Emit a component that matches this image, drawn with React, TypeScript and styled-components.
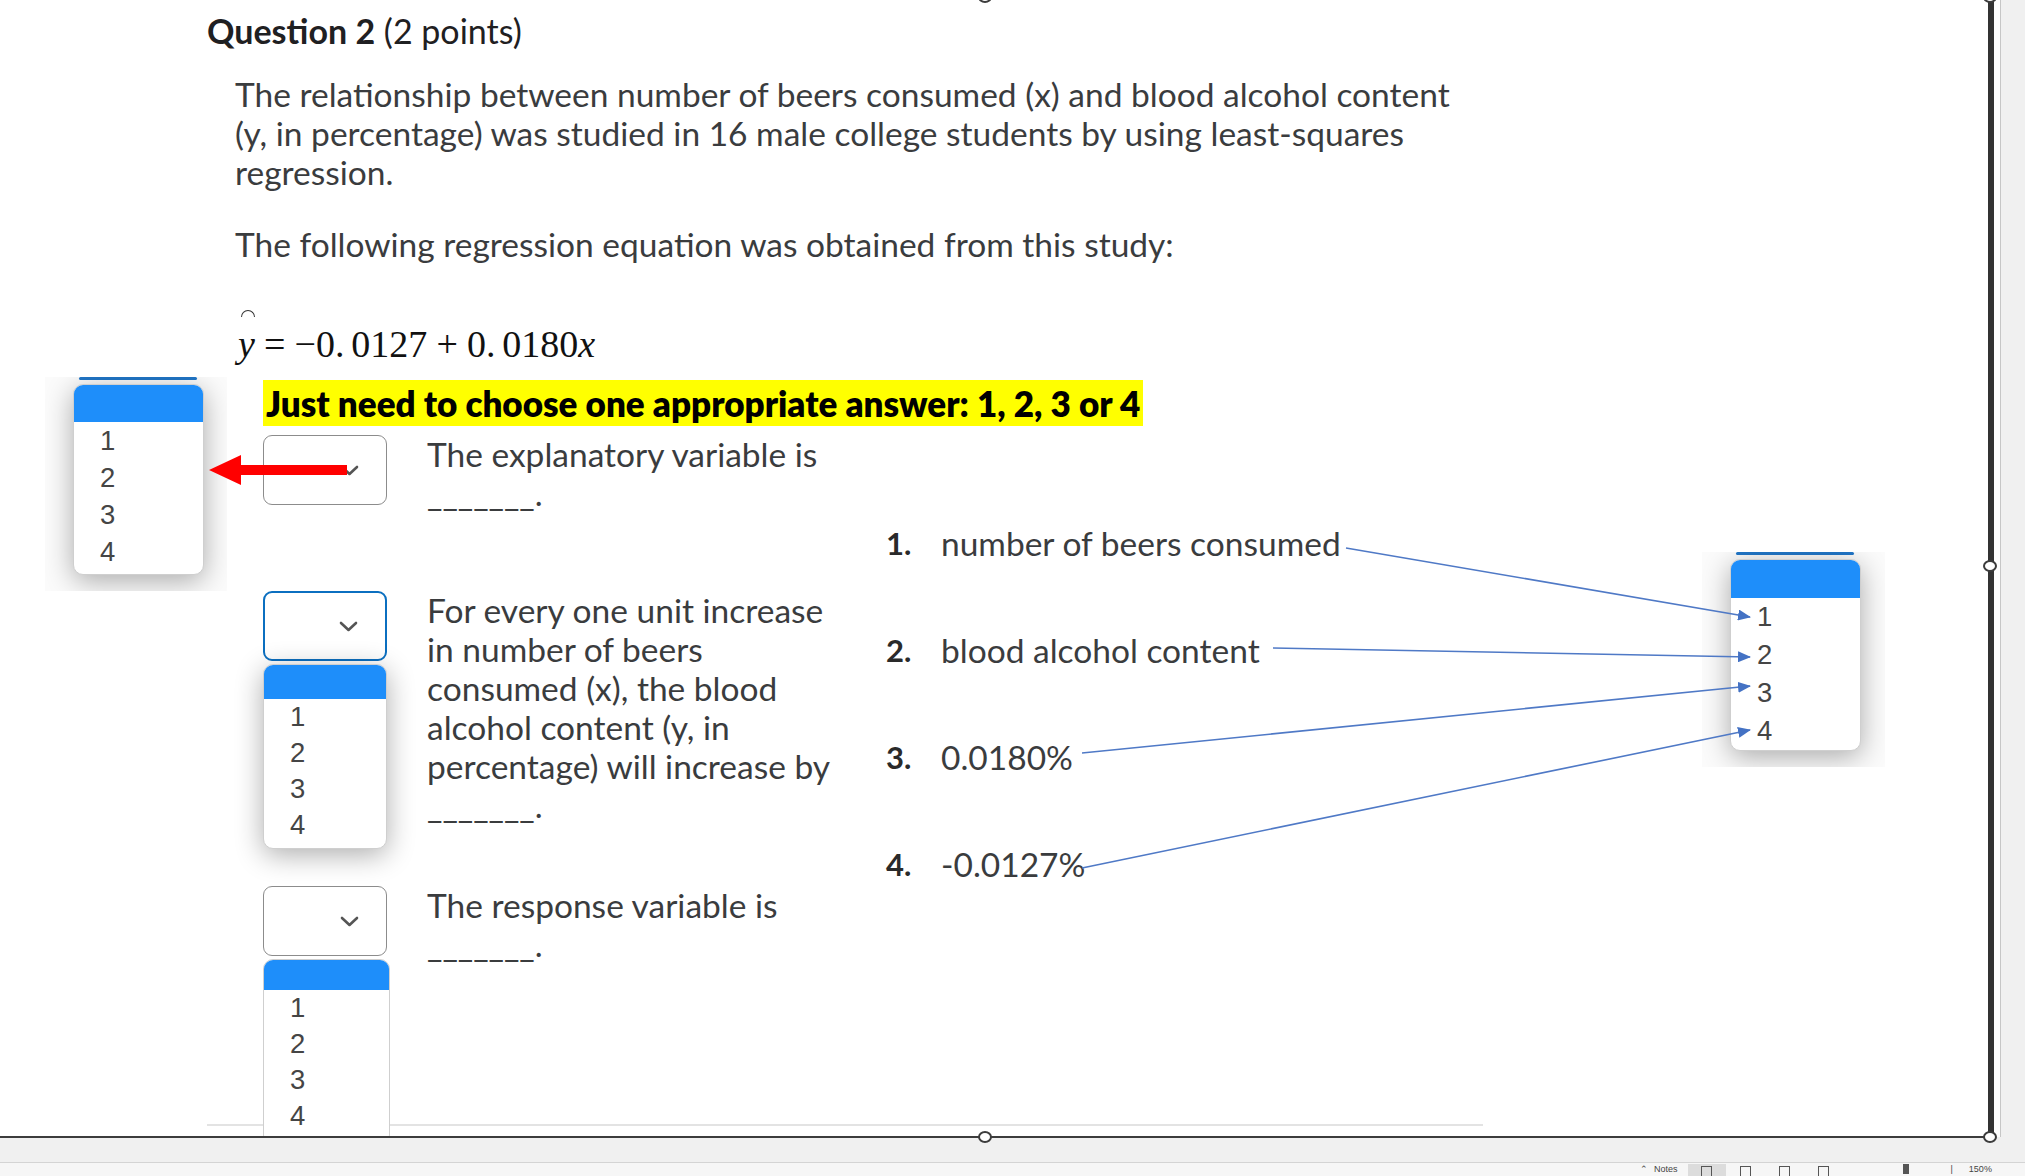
import React from 'react';
import styled, { createGlobalStyle } from 'styled-components';

// Slide-editor capture: a D2L-style quiz question pasted on a slide,
// with two cropped dropdown screenshots and connector arrows.

const GlobalStyle = createGlobalStyle`
  html, body {
    margin: 0;
    padding: 0;
    background: #f0f0f0;
  }
  body {
    width: 2025px;
    height: 1176px;
    overflow: hidden;
    font-family: Lato, "Open Sans", sans-serif;
  }
`;

// ─── window frame ────────────────────────────────────────────────────────

const Window = styled.div`
  position: relative;
  width: 2025px;
  height: 1176px;
  display: flex;
  flex-direction: column;
  background: #f0f0f0;
  overflow: hidden;
`;

const Workspace = styled.div`
  display: flex;
  height: 1138px;
  flex-shrink: 0;
`;

const Canvas = styled.div`
  display: flex;
  width: 1994px;
  border-bottom: 2px solid #3c3c3c;
  box-sizing: border-box;
`;

const Slide = styled.div`
  position: relative;
  flex: 1;
  background: #fff;
  overflow: hidden;
`;

const SelectionEdge = styled.div`
  width: 6px;
  background: #333;
`;

const EdgeStrip = styled.div`
  width: 6px;
  height: 1137px;
  background: #fff;
  border-right: 1px solid #c6c6c6;
`;

const BottomBand = styled.div`
  height: 24px;
  flex-shrink: 0;
  background: #f0f0f0;
  border-bottom: 1px solid #d4d4d4;
`;

const StatusBar = styled.div`
  flex: 1;
  display: flex;
  align-items: flex-start;
  padding: 1px 0 0 1640px;
  background: #f6f6f6;
  color: #444;
  font: 9px/11px "Liberation Sans", Arial, sans-serif;
  overflow: hidden;
`;

const StatusText = styled.span<{ $ml?: number }>`
  margin-left: ${p => p.$ml ?? 0}px;
`;

const ViewButton = styled.div<{ $active?: boolean; $ml?: number }>`
  width: 38px;
  height: 12px;
  margin-left: ${p => p.$ml ?? 0}px;
  background: ${p => (p.$active ? '#dcdcdc' : 'transparent')};
  display: flex;
  justify-content: center;
  padding-top: 2px;
  & > i {
    width: 11px;
    height: 10px;
    border: 1.5px solid #555;
    border-bottom: none;
    box-sizing: border-box;
  }
`;

const SliderThumb = styled.div<{ $ml: number }>`
  width: 6px;
  height: 10px;
  margin-left: ${p => p.$ml}px;
  background: #555;
`;

const Handle = styled.div<{ $x: number; $y: number }>`
  position: absolute;
  left: ${p => p.$x - 7}px;
  top: ${p => p.$y - 6}px;
  width: 14px;
  height: 12px;
  box-sizing: border-box;
  border: 2px solid #3c3c3c;
  border-radius: 50%;
  background: #fff;
`;

// ─── question content ────────────────────────────────────────────────────

const Content = styled.div`
  padding: 11px 0 0 207px;
`;

const Heading = styled.h2`
  margin: 0;
  font: 400 34px/40px Lato, sans-serif;
  color: #1f2022;
  strong {
    font-weight: 700;
  }
`;

const Body = styled.div`
  padding-left: 28px;
  color: #3a3c3e;
`;

const Paragraph = styled.p<{ $gap: number }>`
  margin: ${p => p.$gap}px 0 0;
  font: 400 33.5px/39px Lato, sans-serif;
  white-space: nowrap;
`;

const Equation = styled.div`
  margin-top: 40px;
  font-family: "Liberation Serif", "DejaVu Serif", serif;
  color: #111;
`;

const HatRow = styled.div`
  height: 18px;
  display: flex;
  align-items: flex-end;
  padding-left: 6px;
`;

const Hat = styled.span`
  width: 14px;
  height: 7px;
  box-sizing: border-box;
  border: 1.6px solid #333;
  border-bottom: none;
  border-radius: 8px 8px 0 0;
  margin-bottom: 5px;
`;

const MathLine = styled.div`
  font-size: 38px;
  line-height: 44px;
  white-space: nowrap;
  padding-left: 3px;
`;

const MathVar = styled.i`
  font-style: italic;
`;

const MathOp = styled.span`
  margin: 0 0.24em;
`;

const MathGap = styled.span`
  margin-right: 0.18em;
`;

const Notice = styled.div`
  margin: 14px 0 0 28px;
`;

const Highlight = styled.span`
  display: inline-block;
  padding: 0 3px;
  background: #ffff00;
  color: #000;
  font: 800 35px/46px Lato, sans-serif;
  white-space: nowrap;
`;

const QuizArea = styled.div`
  display: flex;
  margin: 9px 0 0 28px;
`;

const Questions = styled.div`
  width: 623px;
  display: flex;
  flex-direction: column;
`;

const QuestionRow = styled.div<{ $gap: number }>`
  display: flex;
  align-items: flex-start;
  gap: 40px;
  margin-top: ${p => p.$gap}px;
`;

const SelectWrap = styled.div`
  position: relative;
  flex-shrink: 0;
`;

const SelectBox = styled.div<{ $focused?: boolean }>`
  width: 124px;
  height: 70px;
  box-sizing: border-box;
  border: ${p => (p.$focused ? '2.5px solid #0b6fc0' : '1.5px solid #8c8c8c')};
  border-radius: 9px;
  background: #fff;
  display: flex;
  align-items: center;
  justify-content: flex-end;
  padding-right: 27px;
`;

const QuestionText = styled.div`
  font: 400 33.5px/39px Lato, sans-serif;
  color: #3a3c3e;
  white-space: nowrap;
`;

const Blank = styled.span`
  letter-spacing: 0;
`;

const AnswerKey = styled.ol`
  list-style: none;
  margin: 0;
  padding: 89px 0 0;
  display: flex;
  flex-direction: column;
  gap: 68px;
`;

const AnswerItem = styled.li`
  display: flex;
  font: 400 33.5px/39px Lato, sans-serif;
  color: #3a3c3e;
  white-space: nowrap;
`;

const AnswerNum = styled.span`
  width: 55px;
  font-weight: 700;
  font-size: 31px;
  color: #2a2a2a;
`;

const Divider = styled.div`
  width: 1276px;
  height: 2px;
  margin-top: 160px;
  background: #e3e3e3;
`;

// ─── dropdown lists ──────────────────────────────────────────────────────

const OptionList = styled.div<{ $width: number; $head: number; $row: number; $pad?: number; $shadow?: boolean }>`
  --head: ${p => p.$head}px;
  --row: ${p => p.$row}px;
  width: ${p => p.$width}px;
  padding-bottom: ${p => p.$pad ?? 0}px;
  box-sizing: border-box;
  background: #fff;
  border: 1px solid #cfcfcf;
  border-radius: 10px;
  overflow: hidden;
  box-shadow: ${p => (p.$shadow ? '0 6px 28px rgba(0, 0, 0, 0.32)' : 'none')};
  font: 400 27.5px "Liberation Sans", Arial, sans-serif;
  color: #454545;
`;

const OptionHeader = styled.div`
  height: var(--head);
  background: #1e8efa;
`;

const OptionItem = styled.div`
  height: var(--row);
  line-height: var(--row);
  padding-left: 26px;
`;

const DropList = styled.div`
  position: absolute;
  left: 0;
  top: calc(100% + 3px);
  z-index: 3;
`;

const ShotPanel = styled.div<{ $x: number; $y: number; $w: number; $h: number }>`
  position: absolute;
  left: ${p => p.$x}px;
  top: ${p => p.$y}px;
  width: ${p => p.$w}px;
  height: ${p => p.$h}px;
  overflow: hidden;
  background: #fbfbfb;
  display: flex;
  flex-direction: column;
  padding: 0 0 0 28px;
  box-sizing: border-box;
  z-index: 4;
`;

const FocusEdge = styled.div`
  width: 118px;
  height: 3px;
  margin: 0 0 4px 6px;
  background: #2177c9;
  border-radius: 2px;
`;

const Overlay = styled.svg`
  position: absolute;
  left: 0;
  top: 0;
  z-index: 5;
  pointer-events: none;
`;

const Chevron = () => (
  <svg width="19" height="11" viewBox="0 0 19 11">
    <path d="M2 2 L9.5 9 L17 2" fill="none" stroke="#555" strokeWidth="2.6" strokeLinecap="round" strokeLinejoin="round" />
  </svg>
);

const Options: React.FC<{ width: number; head: number; row: number; pad?: number; shadow?: boolean }> = ({
  width,
  head,
  row,
  pad,
  shadow,
}) => (
  <OptionList $width={width} $head={head} $row={row} $pad={pad} $shadow={shadow}>
    <OptionHeader />
    {['1', '2', '3', '4'].map(n => (
      <OptionItem key={n}>{n}</OptionItem>
    ))}
  </OptionList>
);

const answers = [
  ['1.', 'number of beers consumed'],
  ['2.', 'blood alcohol content'],
  ['3.', '0.0180%'],
  ['4.', '-0.0127%'],
];

// connector lines from the answer key into the right-hand dropdown shot
const connectors = [
  [1346, 548, 1750, 617],
  [1273, 648, 1750, 657],
  [1082, 753, 1750, 686],
  [1082, 868, 1750, 730],
];

export default function App() {
  return (
    <Window>
      <GlobalStyle />
      <Workspace>
        <Canvas>
          <Slide>
            <Content>
              <Heading>
                <strong>Question 2</strong> (2 points)
              </Heading>
              <Body>
                <Paragraph $gap={24}>
                  The relationship between number of beers consumed (x) and blood alcohol content
                  <br />
                  (y, in percentage) was studied in 16 male college students by using least-squares
                  <br />
                  regression.
                </Paragraph>
                <Paragraph $gap={33}>The following regression equation was obtained from this study:</Paragraph>
                <Equation>
                  <HatRow>
                    <Hat />
                  </HatRow>
                  <MathLine>
                    <MathVar>y</MathVar>
                    <MathOp>=</MathOp>−<MathGap>0.</MathGap>0127<MathOp>+</MathOp>
                    <MathGap>0.</MathGap>0180<MathVar>x</MathVar>
                  </MathLine>
                </Equation>
                <Notice>
                  <Highlight>Just need to choose one appropriate answer: 1, 2, 3 or 4</Highlight>
                </Notice>
                <QuizArea>
                  <Questions>
                    <QuestionRow $gap={0}>
                      <SelectWrap>
                        <SelectBox>
                          <Chevron />
                        </SelectBox>
                      </SelectWrap>
                      <QuestionText>
                        The explanatory variable is
                        <br />
                        <Blank>_______.</Blank>
                      </QuestionText>
                    </QuestionRow>
                    <QuestionRow $gap={78}>
                      <SelectWrap>
                        <SelectBox $focused>
                          <Chevron />
                        </SelectBox>
                        <DropList>
                          <Options width={124} head={34} row={36} pad={5} shadow />
                        </DropList>
                      </SelectWrap>
                      <QuestionText>
                        For every one unit increase
                        <br />
                        in number of beers
                        <br />
                        consumed (x), the blood
                        <br />
                        alcohol content (y, in
                        <br />
                        percentage) will increase by
                        <br />
                        <Blank>_______.</Blank>
                      </QuestionText>
                    </QuestionRow>
                    <QuestionRow $gap={61}>
                      <SelectWrap>
                        <SelectBox>
                          <Chevron />
                        </SelectBox>
                        <DropList>
                          <Options width={127} head={30} row={36} pad={10} />
                        </DropList>
                      </SelectWrap>
                      <QuestionText>
                        The response variable is
                        <br />
                        <Blank>_______.</Blank>
                      </QuestionText>
                    </QuestionRow>
                  </Questions>
                  <AnswerKey>
                    {answers.map(([n, t]) => (
                      <AnswerItem key={n}>
                        <AnswerNum>{n}</AnswerNum>
                        {t}
                      </AnswerItem>
                    ))}
                  </AnswerKey>
                </QuizArea>
              </Body>
              <Divider />
            </Content>

            <ShotPanel $x={45} $y={377} $w={182} $h={214}>
              <FocusEdge />
              <Options width={131} head={37} row={37} pad={4} shadow />
            </ShotPanel>

            <ShotPanel $x={1702} $y={552} $w={183} $h={215}>
              <FocusEdge />
              <Options width={131} head={38} row={38} shadow />
            </ShotPanel>

            <Overlay width="1987" height="1137" viewBox="0 0 1987 1137">
              <defs>
                <marker id="tri" markerWidth="13" markerHeight="11" refX="12" refY="5.5" orient="auto" markerUnits="userSpaceOnUse">
                  <path d="M0 0 L13 5.5 L0 11 Z" fill="#4472c4" />
                </marker>
              </defs>
              {connectors.map(([x1, y1, x2, y2], i) => (
                <line key={i} x1={x1} y1={y1} x2={x2} y2={y2} stroke="#4f79c6" strokeWidth="1.6" markerEnd="url(#tri)" />
              ))}
              <polygon points="209,470 241,455 241,465 347,465 347,475 241,475 241,485" fill="#ff0000" />
            </Overlay>
          </Slide>
          <SelectionEdge />
        </Canvas>
        <EdgeStrip />
      </Workspace>
      <BottomBand />
      <StatusBar>
        <StatusText>⌃</StatusText>
        <StatusText $ml={6}>Notes</StatusText>
        <ViewButton $active $ml={10}>
          <i />
        </ViewButton>
        <ViewButton $ml={1}>
          <i />
        </ViewButton>
        <ViewButton $ml={1}>
          <i />
        </ViewButton>
        <ViewButton $ml={1}>
          <i />
        </ViewButton>
        <SliderThumb $ml={60} />
        <StatusText $ml={42}>|</StatusText>
        <StatusText $ml={16}>150%</StatusText>
      </StatusBar>

      <Handle $x={985} $y={-3} />
      <Handle $x={1990} $y={-3} />
      <Handle $x={1990} $y={566} />
      <Handle $x={985} $y={1137} />
      <Handle $x={1990} $y={1137} />
    </Window>
  );
}
